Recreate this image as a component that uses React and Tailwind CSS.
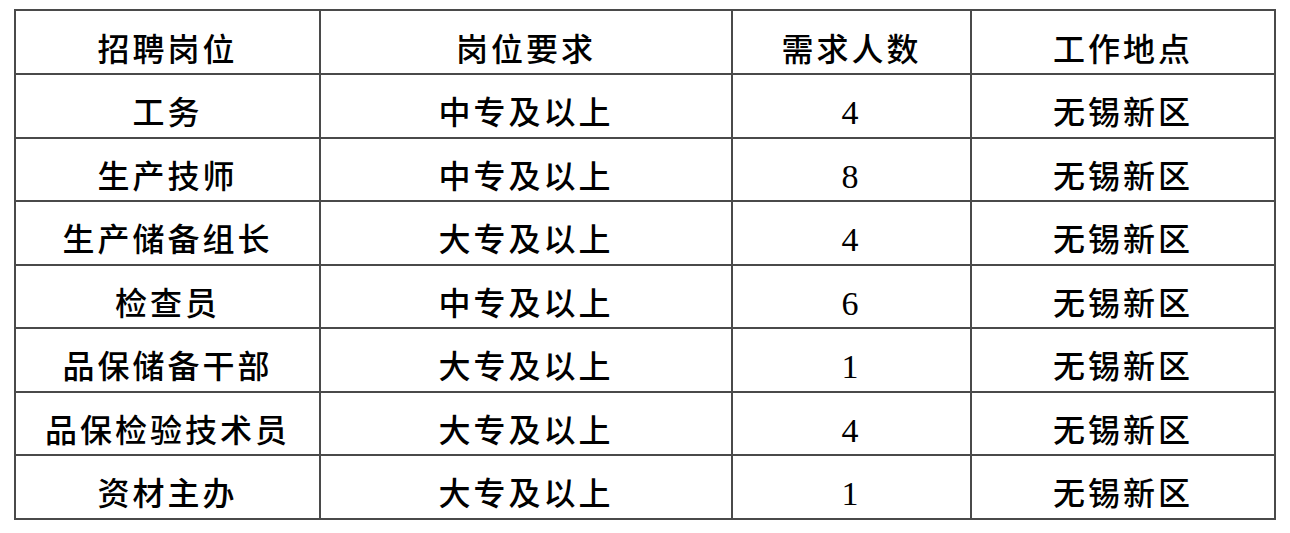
const rows = [
  ["工务", "中专及以上", "4", "无锡新区"],
  ["生产技师", "中专及以上", "8", "无锡新区"],
  ["生产储备组长", "大专及以上", "4", "无锡新区"],
  ["检查员", "中专及以上", "6", "无锡新区"],
  ["品保储备干部", "大专及以上", "1", "无锡新区"],
  ["品保检验技术员", "大专及以上", "4", "无锡新区"],
  ["资材主办", "大专及以上", "1", "无锡新区"],
];

const headers = ["招聘岗位", "岗位要求", "需求人数", "工作地点"];
const widths = ["w-[305px]", "w-[412px]", "w-[239px]", "w-[304px]"];

function Cell({ children, i }) {
  return (
    <td
      className={`${widths[i]} border-2 border-[#4a4a4a] text-center align-middle pt-[15px] leading-none tracking-[3px]`}
    >
      {children}
    </td>
  );
}

export default function App() {
  return (
    <div
      className="w-[1290px] h-[533px] bg-white pt-[9px] pl-[14px] text-black text-[32px] font-medium"
      style={{ fontFamily: '"Liberation Serif", "Noto Sans CJK SC", serif' }}
    >
      <table className="border-collapse table-fixed w-[1262px]">
        <tbody>
          <tr className="h-[64px]">
            {headers.map((h, i) => (
              <Cell key={h} i={i}>
                {h}
              </Cell>
            ))}
          </tr>
          {rows.map((r, idx) => (
            <tr key={idx} className="h-[63.5px]">
              {r.map((c, i) => (
                <Cell key={i} i={i}>
                  {i === 2 ? <span className="text-[34px] font-normal">{c}</span> : c}
                </Cell>
              ))}
            </tr>
          ))}
        </tbody>
      </table>
    </div>
  );
}
